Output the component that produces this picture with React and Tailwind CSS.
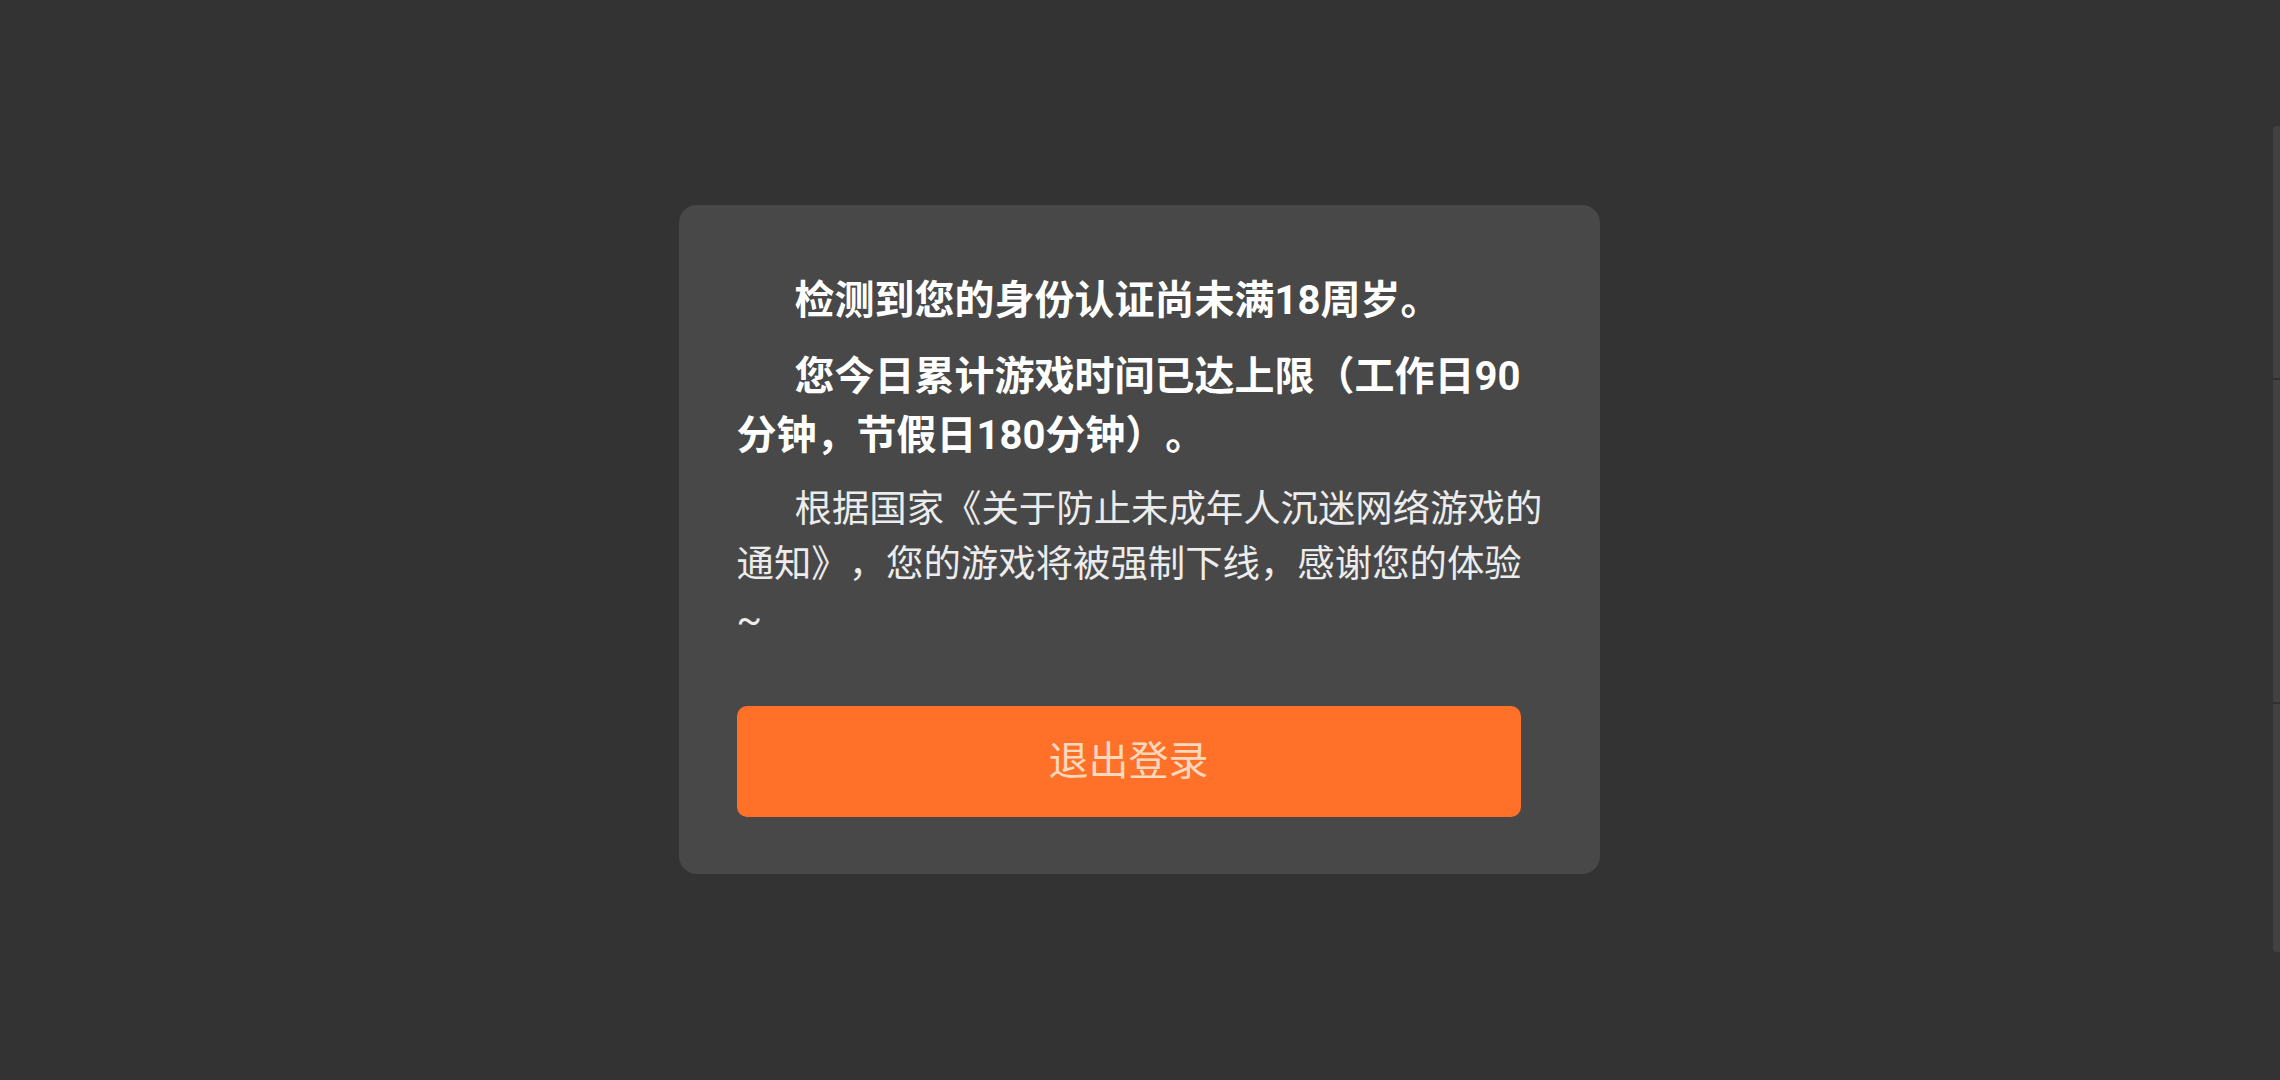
const font = { fontFamily: 'Roboto, "Noto Sans CJK SC", sans-serif' }

// 右侧滚动条样式的细条（三段）
function SideStrip() {
  return (
    <div className="mt-[126px] flex h-[826px] w-[7px] flex-col self-start">
      <div className="h-[252px] rounded-tl-[4px] bg-[#414141]" />
      <div className="h-[2px] bg-[#303030]" />
      <div className="h-[322px] bg-[#414141]" />
      <div className="h-[2px] bg-[#303030]" />
      <div className="flex-1 rounded-bl-[4px] bg-[#414141]" />
    </div>
  )
}

export default function App() {
  return (
    <div className="flex h-[1080px] w-[2280px] bg-[#333333] [text-spacing-trim:space-all]" style={font}>
      <div className="flex flex-1 justify-center pl-[5px]">
        {/* 防沉迷提示弹窗 */}
        <div className="mt-[205px] flex h-[669px] w-[921px] flex-col rounded-[18px] bg-[#484848] pl-[58px] pr-[55px] pt-[66px] pb-[57px]">
          <p className="indent-[58px] text-[40px] font-bold leading-[59px] text-white">
            检测到您的身份认证尚未满18周岁。
          </p>
          <p className="mt-[17px] indent-[58px] text-[40px] font-bold leading-[59px] text-white">
            您今日累计游戏时间已达上限（工作日90分钟，节假日180分钟）。
          </p>
          <p className="mt-[17px] indent-[58px] text-[37.4px] leading-[55px] text-[#ececec]">
            根据国家《关于防止未成年人沉迷网络游戏的通知》，您的游戏将被强制下线，感谢您的体验<wbr />~
          </p>
          <button className="mt-auto flex h-[111px] w-[784px] items-center justify-center rounded-[10px] bg-[#ff7028] text-[40px] text-[#fcd8bd]">
            退出登录
          </button>
        </div>
      </div>
      <SideStrip />
    </div>
  )
}
